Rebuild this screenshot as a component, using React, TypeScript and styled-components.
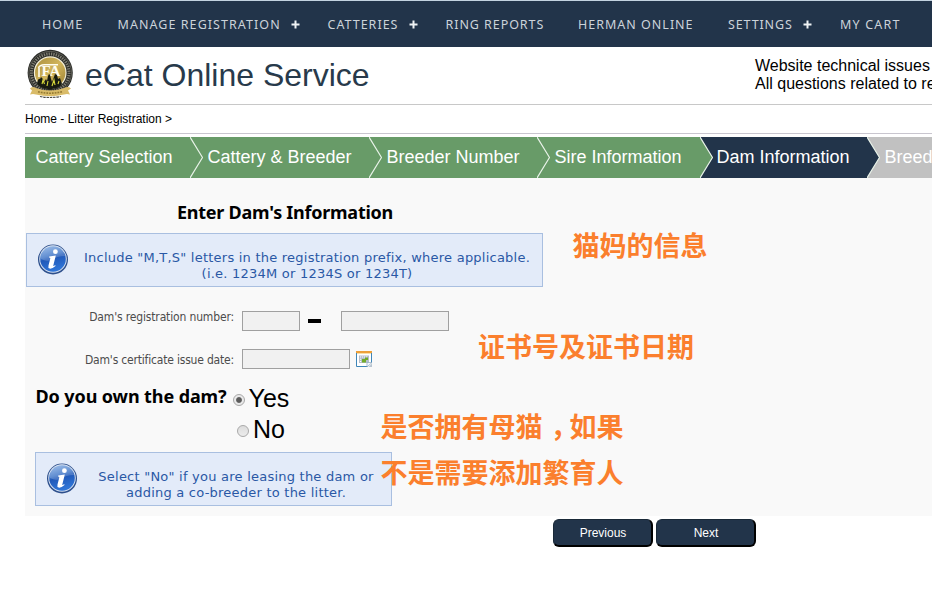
import React from "react";
import styled, { createGlobalStyle } from "styled-components";

const GlobalStyle = createGlobalStyle`
  *, *::before, *::after { box-sizing: border-box; }
  html, body { margin: 0; height: 605px; overflow: hidden; background: #fff; }
  body { font-family: "Liberation Sans", Arial, sans-serif; color: #000; }
`;

const NAVY = "#22344a";
const GREEN = "#689b68";
const GREY = "#c1c1c1";

const Page = styled.div`
  position: relative;
  width: 932px;
  height: 605px;
  overflow: hidden;
`;

const NavBar = styled.nav`
  display: flex;
  align-items: center;
  height: 47px;
  padding-left: 42px;
  background: ${NAVY};
  border-top: 1px solid #c3d3e0;
`;

const NavItem = styled.a<{ $slot: number; $track: number; $gap?: number }>`
  display: flex;
  align-items: center;
  flex: 0 0 ${(p) => p.$slot}px;
  margin-right: ${(p) => p.$gap ?? 0}px;
  padding-top: 2px;
  font: 12.5px/18px "Noto Sans", "Segoe UI", sans-serif;
  letter-spacing: ${(p) => p.$track}px;
  color: #ccd3da;
  white-space: nowrap;
`;

const Plus = styled.svg`
  width: 9px;
  height: 9px;
  margin: 0 0 1px auto;
`;

const Wrap = styled.div`
  margin-left: 25px;
`;

const Header = styled.header`
  display: flex;
  height: 58px;
  border-bottom: 1px solid #c8c8c8;
`;

const Logo = styled.svg`
  flex: none;
  width: 50px;
  height: 52px;
  margin-top: 2px;
`;

const Title = styled.h1`
  flex: 0 0 679px;
  margin: 0;
  padding: 10px 0 0 10px;
  font-size: 32px;
  line-height: 37px;
  font-weight: 400;
  color: #283a4b;
`;

const Contact = styled.div`
  padding: 10px 0 0 1px;
  font-size: 16px;
  line-height: 18px;
  white-space: nowrap;
`;

const Breadcrumb = styled.div`
  height: 29px;
  padding-top: 7px;
  font-size: 12px;
  line-height: 14px;
  border-bottom: 1px solid #c9c6cf;
`;

const Steps = styled.div`
  display: flex;
  height: 41px;
  margin-top: 3px;
`;

const Step = styled.div<{ $w: number; $bg: string; $pad: number }>`
  flex: 0 0 ${(p) => p.$w}px;
  padding: 10px 0 0 ${(p) => p.$pad}px;
  background: ${(p) => p.$bg};
  color: #fff;
  font-size: 18px;
  line-height: 21px;
  white-space: nowrap;
`;

const ChevronSvg = styled.svg`
  flex: none;
  width: 13px;
  height: 41px;
`;

const Panel = styled.section`
  height: 338px;
  padding-top: 22px;
  background: #f9f9f9;
`;

const PanelTitle = styled.h2`
  margin: 0 0 8px 152px;
  font: 700 18px/25px "Noto Sans", "Segoe UI", sans-serif;
  letter-spacing: -0.25px;
`;

const Notice = styled.div<{ $w: number; $left: number }>`
  display: flex;
  align-items: flex-start;
  width: ${(p) => p.$w}px;
  height: 54px;
  margin-left: ${(p) => p.$left}px;
  padding: 9px 0 0 10px;
  background: #e3ebf9;
  border: 1px solid #a9bfe0;
`;

const InfoSvg = styled.svg`
  flex: none;
  width: 32px;
  height: 32px;
`;

const NoticeText = styled.p`
  flex: 1;
  margin: 7px 0 0 3px;
  font: 13px/16px "DejaVu Sans", Verdana, sans-serif;
  letter-spacing: 0.23px;
  text-align: center;
  white-space: nowrap;
  color: #2a58a5;
`;

const FieldRow = styled.div<{ $top: number }>`
  display: flex;
  align-items: flex-start;
  height: 20px;
  margin-top: ${(p) => p.$top}px;
`;

const FieldLabel = styled.label<{ $lift: number; $track: number }>`
  flex: 0 0 209px;
  margin: ${(p) => p.$lift}px 8px 0 0;
  font: 12px/16px "DejaVu Sans Condensed", Tahoma, "Noto Sans", sans-serif;
  letter-spacing: ${(p) => p.$track}px;
  text-align: right;
  white-space: nowrap;
  color: #4c4c4c;
`;

const Field = styled.input<{ $w: number }>`
  width: ${(p) => p.$w}px;
  height: 20px;
  padding: 0 3px;
  background: #f1f1f1;
  border: 1px solid #a0a0a0;
  border-radius: 0;
`;

const Dash = styled.span`
  width: 13px;
  height: 4px;
  margin: 8px 20px 0 8px;
  background: #000;
`;

const CalendarSvg = styled.svg`
  width: 16px;
  height: 16px;
  margin: 2px 0 0 6px;
`;

const Question = styled.div`
  display: flex;
  height: 31px;
  margin-top: 13px;
  padding-left: 11px;
`;

const QuestionText = styled.h3`
  flex: 0 0 197px;
  margin: 2px 0 0 -0.5px;
  font: 700 18px/25px "Noto Sans", "Segoe UI", sans-serif;
  letter-spacing: -0.1px;
  white-space: nowrap;
`;

const Choice = styled.label<{ $left?: number }>`
  display: flex;
  align-items: center;
  height: 31px;
  margin-left: ${(p) => p.$left ?? 0}px;
  padding-top: 2px;
  font-size: 25px;
  line-height: 31px;
`;

const Radio = styled.span<{ $on?: boolean }>`
  width: 12px;
  height: 12px;
  margin: 2px 4px 0 0;
  border: 1px solid #a9a9a9;
  border-radius: 50%;
  background: ${(p) =>
    p.$on
      ? "radial-gradient(circle, #5c5c5c 0 2.4px, #e9e9e9 3.4px)"
      : "linear-gradient(#dcdcdc, #ececec)"};
`;

const ChoiceNotice = styled(Notice)`
  margin-top: 8px;
`;

const Actions = styled.div`
  display: flex;
  gap: 3px;
  margin: 3px 0 0 528px;
`;

const Button = styled.button`
  width: 100px;
  height: 28px;
  padding: 1px 0 0 1px;
  border: 1px solid #1a2938;
  border-right: 2px solid #000;
  border-bottom: 2px solid #000;
  border-radius: 6px;
  background: ${NAVY};
  color: #fff;
  font: 12px "Liberation Sans", Arial, sans-serif;
`;

const Annotation = styled.div<{ $x: number; $y: number }>`
  position: absolute;
  left: ${(p) => p.$x}px;
  top: ${(p) => p.$y}px;
  font: 700 27px/46px "Noto Sans CJK SC", sans-serif;
  color: #fb7f2d;
  white-space: nowrap;
`;

const Comma = styled.span`
  padding-left: 8px;
  margin-right: -8px;
`;

const SealText = styled.text`
  font: 700 15px "Liberation Serif", serif;
  fill: #fffdf0;
`;

const PlusIcon = () => (
  <Plus viewBox="0 0 9 9">
    <path d="M4.5 0.5v8M0.5 4.5h8" stroke="#f0f3f5" strokeWidth="2" />
  </Plus>
);

const Chevron = ({ left, right }: { left: string; right: string }) => (
  <ChevronSvg viewBox="0 0 13 41">
    <rect width="13" height="41" fill={right} />
    <path d="M0 0L12.5 20.5L0 41Z" fill={left} />
    <path d="M0 0L12.5 20.5L0 41" fill="none" stroke="#e9f3e9" strokeWidth="1.2" />
  </ChevronSvg>
);

const InfoIcon = ({ id }: { id: string }) => (
  <InfoSvg viewBox="0 0 32 32">
    <defs>
      <linearGradient id={id} x1="0" y1="0" x2="0.3" y2="1">
        <stop offset="0" stopColor="#8db4e6" />
        <stop offset="0.45" stopColor="#3a72c6" />
        <stop offset="0.55" stopColor="#2058b8" />
        <stop offset="1" stopColor="#2f74d6" />
      </linearGradient>
    </defs>
    <circle cx="16" cy="16.5" r="15" fill="#2d4f8c" />
    <circle cx="16" cy="16" r="13.8" fill="#d3dff0" />
    <circle cx="16" cy="16" r="12.8" fill={`url(#${id})`} />
    <path d="M4 16A12 12 0 0 1 28 13Q20 13 14 17Q9 19 4 16Z" fill="#fff" opacity="0.2" />
    <circle cx="18.4" cy="8.7" r="2.4" fill="#fff" />
    <path
      d="M12.2 13.6L18.8 12.6L16.3 22.4Q16 23.8 18.2 22L18.5 22.9Q15 26 12.7 25.6Q10.8 25.1 11.5 22.6L13.3 15.4Q13.5 14.5 12 14.5Z"
      fill="#fff"
    />
  </InfoSvg>
);

const CalendarIcon = () => (
  <CalendarSvg viewBox="0 0 16 16">
    <path d="M0.5 1h15v10.5L11.5 15.5H0.5z" fill="#fff" />
    <path d="M0.5 2v13.5H12M15.5 2v10" fill="none" stroke="#3f86b8" />
    <path d="M0 0h16v2H0z" fill="#eda03a" />
    <path d="M1 2h14v1H1z" fill="#fbdfa6" />
    <path d="M3 4.5h10v7.5H3z" fill="#b4bcc9" />
    <path
      d="M4 5.5h1.2v1H4zM6 5.5h1.2v1H6zM8 5.5h1.2v1H8zM10 5.5h1.2v1H10zM4 7.7h1.2v1H4zM4 10h1.2v1H4z"
      fill="#fff"
    />
    <path d="M6 8h3V6.5h3V9h-2v2.5H6z" fill="#72ab28" />
    <path d="M11 16v-4.5h5z" fill="#f4f8fb" stroke="#8ba5bd" strokeWidth="0.7" />
    <path d="M12.5 16l3.5-3.5V16z" fill="#b8c4d0" />
  </CalendarSvg>
);

const ClubLogo = () => (
  <Logo viewBox="0 0 50 52">
    <defs>
      <linearGradient id="sealGold" x1="0" y1="0" x2="1" y2="1">
        <stop offset="0" stopColor="#a98e3c" />
        <stop offset="0.5" stopColor="#d2b55c" />
        <stop offset="1" stopColor="#9a7f30" />
      </linearGradient>
    </defs>
    <ellipse cx="25.2" cy="23.7" rx="22.6" ry="23" fill="#2a2b27" />
    <circle cx="25.2" cy="23.7" r="21.3" fill="none" stroke="#8f8c80" strokeWidth="0.5" />
    <circle cx="25.2" cy="23.7" r="18.8" fill="none" stroke="#a7a495" strokeWidth="3" strokeDasharray="1.3 1.1" opacity="0.7" />
    <circle cx="25.2" cy="23.7" r="16.4" fill="#f3eed8" />
    <circle cx="25.2" cy="23.7" r="15.2" fill="url(#sealGold)" />
    <path d="M13.5 19Q15 15.5 20 15.8H33M14 19v9" fill="none" stroke="#fffdf0" strokeWidth="1.6" />
    <SealText x="16.5" y="27">FA</SealText>
    <path
      d="M12 34c1-4 2-5 3-4l1-2 2 2 1 3 2-3 1 2 1-5 1-2 1 1 1 4 1 3 2-5 1-3 2 1 1 4 2-1 1 3 1 3c-4 7-21 7-25-1z"
      fill="#171a10"
    />
    <path d="M17 35l1-4 1.5 4M22 37l1-5M27 37l2-6 1 5M33 35l1-3" stroke="#d8da3c" strokeWidth="1.1" fill="none" />
    <path d="M5 39.5q3-2.5 6-.5q14 5 28 0q4-2 7 .5l-3 2 2 4q-3-1-6 0q-14 3.5-28 0q-3-1-6 0l2-4z" fill="#d9bb68" />
    <path d="M13 42.7q12 3 24 0" fill="none" stroke="#927831" strokeWidth="1.6" strokeDasharray="1.8 1" />
    <path d="M15 47.5q10 2 21 0" fill="none" stroke="#4c4c46" strokeWidth="1.2" strokeDasharray="2.5 0.8" />
  </Logo>
);

const navItems = [
  { text: "HOME", slot: 75.5, track: 0.98 },
  { text: "MANAGE REGISTRATION", slot: 182.5, track: 1.06, gap: 27.5 },
  { text: "CATTERIES", slot: 90, track: 1, gap: 28 },
  { text: "RING REPORTS", slot: 132.5, track: 0.94 },
  { text: "HERMAN ONLINE", slot: 150, track: 1 },
  { text: "SETTINGS", slot: 84, track: 0.88, gap: 28 },
  { text: "MY CART", slot: 70, track: 1.18 },
];

export default function App() {
  return (
    <Page>
      <GlobalStyle />
      <NavBar>
        {navItems.map((item) => (
          <NavItem key={item.text} $slot={item.slot} $track={item.track} $gap={item.gap}>
            {item.text}
            {item.gap && <PlusIcon />}
          </NavItem>
        ))}
      </NavBar>
      <Wrap>
        <Header>
          <ClubLogo />
          <Title>eCat Online Service</Title>
          <Contact>
            Website technical issues
            <br />
            All questions related to re
          </Contact>
        </Header>
        <Breadcrumb>Home - Litter Registration &gt;</Breadcrumb>
        <Steps>
          <Step $w={165} $bg={GREEN} $pad={10.5}>Cattery Selection</Step>
          <Chevron left={GREEN} right={GREEN} />
          <Step $w={166} $bg={GREEN} $pad={4.4}>Cattery &amp; Breeder</Step>
          <Chevron left={GREEN} right={GREEN} />
          <Step $w={155} $bg={GREEN} $pad={4.4}>Breeder Number</Step>
          <Chevron left={GREEN} right={GREEN} />
          <Step $w={149.5} $bg={GREEN} $pad={4.5}>Sire Information</Step>
          <Chevron left={GREEN} right={NAVY} />
          <Step $w={154.5} $bg={NAVY} $pad={4}>Dam Information</Step>
          <Chevron left={NAVY} right={GREY} />
          <Step $w={53} $bg={GREY} $pad={4.6}>Breed</Step>
        </Steps>
        <Panel>
          <PanelTitle>Enter Dam's Information</PanelTitle>
          <Notice $w={517} $left={1}>
            <InfoIcon id="infoBlueA" />
            <NoticeText>
              Include "M,T,S" letters in the registration prefix, where applicable.
              <br />
              (i.e. 1234M or 1234S or 1234T)
            </NoticeText>
          </Notice>
          <FieldRow $top={24}>
            <FieldLabel $lift={-2} $track={-0.15}>Dam's registration number:</FieldLabel>
            <Field $w={58} />
            <Dash />
            <Field $w={108} />
          </FieldRow>
          <FieldRow $top={18}>
            <FieldLabel $lift={3} $track={-0.19}>Dam's certificate issue date:</FieldLabel>
            <Field $w={108} />
            <CalendarIcon />
          </FieldRow>
          <Question>
            <QuestionText>Do you own the dam?</QuestionText>
            <Choice>
              <Radio $on />
              Yes
            </Choice>
          </Question>
          <Choice $left={212}>
            <Radio />
            No
          </Choice>
          <ChoiceNotice $w={357} $left={10}>
            <InfoIcon id="infoBlueB" />
            <NoticeText>
              Select "No" if you are leasing the dam or
              <br />
              adding a co-breeder to the litter.
            </NoticeText>
          </ChoiceNotice>
        </Panel>
        <Actions>
          <Button>Previous</Button>
          <Button>Next</Button>
        </Actions>
      </Wrap>
      <Annotation $x={572.5} $y={222}>猫妈的信息</Annotation>
      <Annotation $x={478} $y={323}>证书号及证书日期</Annotation>
      <Annotation $x={380.5} $y={403}>
        是否拥有母猫<Comma>，</Comma>如果
        <br />
        不是需要添加繁育人
      </Annotation>
    </Page>
  );
}
